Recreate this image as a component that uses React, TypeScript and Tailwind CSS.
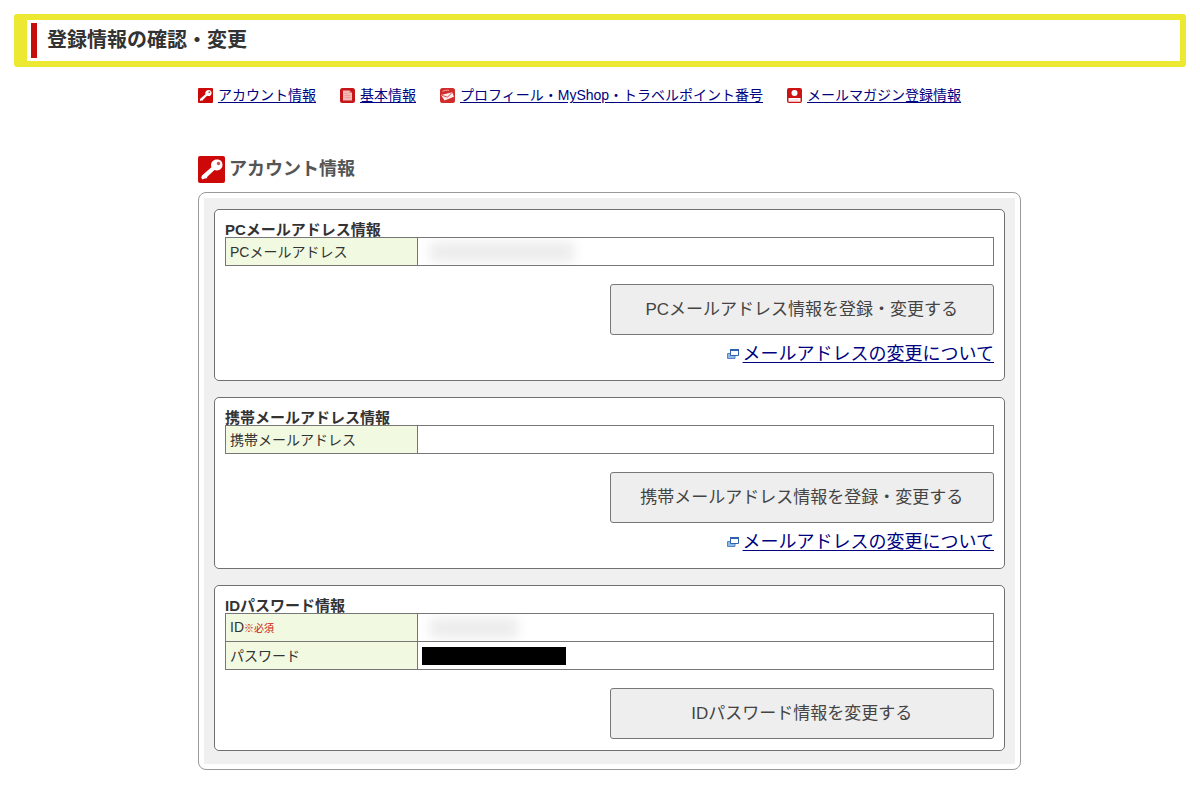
import type { ReactNode } from 'react';

type Row = { label: string; required?: boolean; value?: 'mail' | 'id' | 'password' };
type Section = { title: string; rows: Row[]; action: string; help?: boolean };

const sections: Section[] = [
  {
    title: 'PCメールアドレス情報',
    rows: [{ label: 'PCメールアドレス', value: 'mail' }],
    action: 'PCメールアドレス情報を登録・変更する',
    help: true,
  },
  {
    title: '携帯メールアドレス情報',
    rows: [{ label: '携帯メールアドレス' }],
    action: '携帯メールアドレス情報を登録・変更する',
    help: true,
  },
  {
    title: 'IDパスワード情報',
    rows: [
      { label: 'ID', required: true, value: 'id' },
      { label: 'パスワード', value: 'password' },
    ],
    action: 'IDパスワード情報を変更する',
  },
];

function KeyIcon({ className }: { className: string }) {
  return (
    <svg viewBox="0 0 27 27" className={className} aria-hidden="true">
      <rect width="27" height="27" rx="2" fill="#cc0808" />
      <path
        d="M13 9.500C13 6 15.500 3.500 19 3.500s5.500 2.200 5.500 5.300-2.300 5.700-5.700 5.700c-.9 0-1.700-.1-2.300-.4L9.500 20.500 8.800 22.300 6.500 22.500 4.500 23.500 3.200 21.800 4 19.500 13.400 11.300z"
        fill="#fff"
      />
      <circle cx="20.500" cy="7.500" r="1.700" fill="#d65050" />
    </svg>
  );
}

function DocumentIcon({ className }: { className: string }) {
  return (
    <svg viewBox="0 0 15 15" className={className} aria-hidden="true">
      <rect width="15" height="15" rx="2.500" fill="#c4161a" />
      <path d="M3 2.500h6.500L12 5v7.500H3z" fill="#f6b8b4" />
      <path d="M9.500 2.500V5H12z" fill="#e07a78" />
      <path d="M4.500 5.500h3.500M4.500 7.500h6M4.500 9.500h6" stroke="#ea9490" strokeWidth=".8" />
    </svg>
  );
}

function EnvelopeIcon({ className }: { className: string }) {
  return (
    <svg viewBox="0 0 15 15" className={className} aria-hidden="true">
      <rect width="15" height="15" rx="2.500" fill="#d02c2c" />
      <path d="M1 7 12.200 4.200l1.800 4.600-9.500 3.700z" fill="#fdebe9" />
      <path d="m1.500 7.200 6 2L12 4.500" fill="none" stroke="#d65050" strokeWidth="1" />
      <path d="M2.500 3.500c2-1.300 4.500-1.500 6.500-1" fill="none" stroke="#eea09a" strokeWidth="1" />
    </svg>
  );
}

function PersonIcon({ className }: { className: string }) {
  return (
    <svg viewBox="0 0 15 15" className={className} aria-hidden="true">
      <rect width="15" height="15" rx="2" fill="#cc1414" />
      <circle cx="7.500" cy="5" r="3" fill="#fff" />
      <path d="M1.500 13.700V10h12v3.700z" fill="#fff" />
      <path d="M3.500 12h8" stroke="#f4c0c0" strokeWidth=".8" />
    </svg>
  );
}

function WindowIcon() {
  return (
    <svg viewBox="0 0 12 12" className="size-3 shrink-0" aria-hidden="true">
      <path d="M.5 5.500h7.500v5H.5z" fill="#8fb8e4" stroke="#5587c4" />
      <path d="M3.500 1.500h8v6h-8z" fill="#fff" stroke="#2f62ad" />
      <path d="M3 2h9" stroke="#2f62ad" strokeWidth="2" />
    </svg>
  );
}

function NavLink({ icon, children }: { icon: ReactNode; children: ReactNode }) {
  return (
    <a href="#" className="flex items-center gap-[5px] whitespace-nowrap text-[#000080]">
      {icon}
      <span className="underline underline-offset-2">{children}</span>
    </a>
  );
}

function Value({ kind }: { kind?: Row['value'] }) {
  if (kind === 'mail') return <div className="ml-2 h-5 w-36 bg-[#ececec] blur-[6px]" />;
  if (kind === 'id') return <div className="ml-2 h-5 w-22 bg-[#ececec] blur-[6px]" />;
  if (kind === 'password') return <div className="h-[18px] w-36 bg-black" />;
  return null;
}

function Card({ title, rows, action, help }: Section) {
  return (
    <section className="rounded-[5px] border border-[#707070] bg-white px-2.5 pt-[13px] pb-[11px]">
      <h3 className="text-[15px] leading-[14px] font-bold text-[#333]">{title}</h3>
      <table className="w-full table-fixed border-collapse text-sm leading-5 text-[#333]">
        <colgroup>
          <col className="w-1/4" />
          <col />
        </colgroup>
        <tbody>
          {rows.map((row) => (
            <tr key={row.label} className="h-7">
              <th scope="row" className="border border-[#777] bg-[#f1fae0] px-1 py-0 text-left font-normal">
                {row.label}
                {row.required && <span className="text-[10px] text-[#cc1414]">※必須</span>}
              </th>
              <td className="overflow-hidden border border-[#777] px-1 py-0">
                <Value kind={row.value} />
              </td>
            </tr>
          ))}
        </tbody>
      </table>
      <div className="mt-[18px] flex flex-col items-end">
        <button
          type="button"
          className="h-[51px] w-1/2 rounded-[3px] border border-[#777] bg-[#eee] text-[17px] text-[#444]"
        >
          {action}
        </button>
        {help && (
          <a href="#" className="mt-[7px] mb-[3px] flex items-center gap-1 text-lg leading-6 text-[#000080]">
            <WindowIcon />
            <span className="underline underline-offset-2">メールアドレスの変更について</span>
          </a>
        )}
      </div>
    </section>
  );
}

export default function App() {
  return (
    <div className="min-h-screen bg-white p-3.5 font-['Liberation_Sans','Noto_Sans_CJK_JP',sans-serif] text-[#333]">
      <header className="rounded-[3px] border-y-6 border-r-6 border-l-[13px] border-[#ede932] bg-white py-[3px] pl-1">
        <h1 className="border-l-6 border-[#c40d0d] pl-2.5 text-xl leading-[35px] font-bold">登録情報の確認・変更</h1>
      </header>

      <main className="mr-[165px] ml-[184px]">
        <nav className="mt-[18px] flex gap-6 text-sm leading-5">
          <NavLink icon={<KeyIcon className="size-[15px]" />}>アカウント情報</NavLink>
          <NavLink icon={<DocumentIcon className="size-[15px]" />}>基本情報</NavLink>
          <NavLink icon={<EnvelopeIcon className="size-[15px]" />}>プロフィール・MyShop・トラベルポイント番号</NavLink>
          <NavLink icon={<PersonIcon className="size-[15px]" />}>メールマガジン登録情報</NavLink>
        </nav>

        <h2 className="mt-[51px] flex items-center gap-1 text-lg leading-[27px] font-bold text-[#555]">
          <KeyIcon className="size-[27px]" />
          アカウント情報
        </h2>

        <div className="mt-[9px] rounded-lg border border-[#999] bg-white p-[5px]">
          <div className="flex flex-col gap-4 bg-[#f0f0f0] px-2.5 pt-[11px] pb-[13px]">
            {sections.map((section) => (
              <Card key={section.title} {...section} />
            ))}
          </div>
        </div>
      </main>
    </div>
  );
}
